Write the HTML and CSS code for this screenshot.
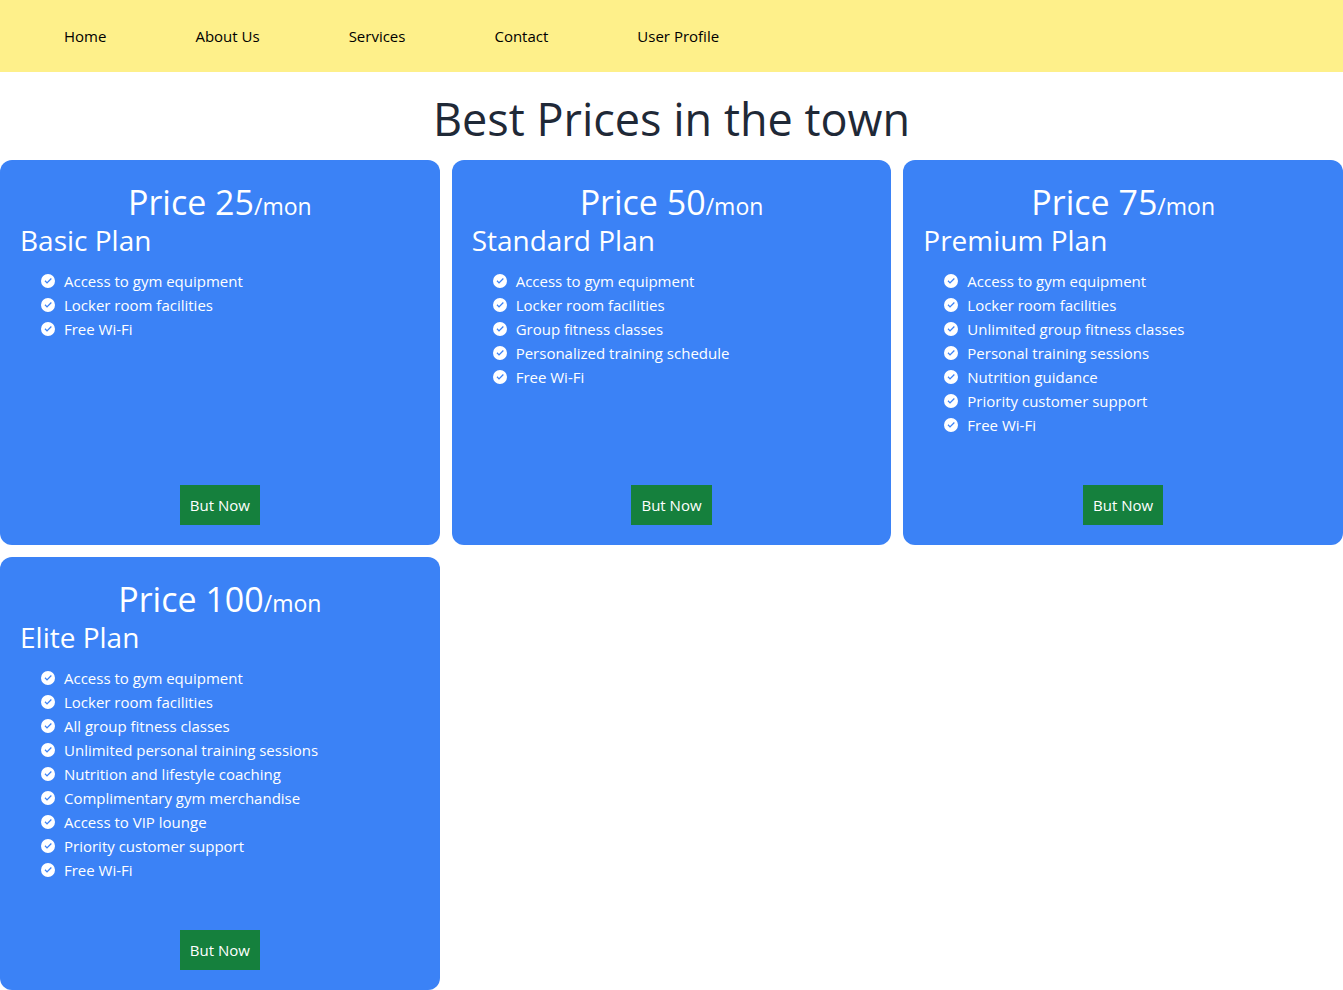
FILE: index.html
```html
<!DOCTYPE html>
<html lang="en">
<head>
<meta charset="utf-8">
<title>Gym Pricing</title>
<link rel="stylesheet" href="styles.css">
</head>
<body>
<svg class="sprite" aria-hidden="true">
  <symbol id="check" viewBox="0 0 24 24">
    <path fill="currentColor" fill-rule="evenodd" d="M12 0a12 12 0 1 0 0 24a12 12 0 0 0 0-24zM17 6.900l1.500 1.500l-8.200 8.200l-4.200-4.200l1.500-1.500l2.700 2.700z"/>
  </symbol>
</svg>
<nav class="nav">
  <ul class="nav-list">
    <li><a href="#home">Home</a></li>
    <li><a href="#about">About Us</a></li>
    <li><a href="#services">Services</a></li>
    <li><a href="#contact">Contact</a></li>
    <li><a href="#profile">User Profile</a></li>
  </ul>
</nav>
<main>
  <h1 class="title">Best Prices in the town</h1>
  <div class="plans">
    <section class="card">
      <p class="price">Price 25<span class="period">/mon</span></p>
      <h2 class="plan">Basic Plan</h2>
      <ul class="features">
        <li><svg class="icon"><use href="#check"/></svg>Access to gym equipment</li>
        <li><svg class="icon"><use href="#check"/></svg>Locker room facilities</li>
        <li><svg class="icon"><use href="#check"/></svg>Free Wi-Fi</li>
      </ul>
      <button class="buy" type="button">But Now</button>
    </section>
    <section class="card">
      <p class="price">Price 50<span class="period">/mon</span></p>
      <h2 class="plan">Standard Plan</h2>
      <ul class="features">
        <li><svg class="icon"><use href="#check"/></svg>Access to gym equipment</li>
        <li><svg class="icon"><use href="#check"/></svg>Locker room facilities</li>
        <li><svg class="icon"><use href="#check"/></svg>Group fitness classes</li>
        <li><svg class="icon"><use href="#check"/></svg>Personalized training schedule</li>
        <li><svg class="icon"><use href="#check"/></svg>Free Wi-Fi</li>
      </ul>
      <button class="buy" type="button">But Now</button>
    </section>
    <section class="card">
      <p class="price">Price 75<span class="period">/mon</span></p>
      <h2 class="plan">Premium Plan</h2>
      <ul class="features">
        <li><svg class="icon"><use href="#check"/></svg>Access to gym equipment</li>
        <li><svg class="icon"><use href="#check"/></svg>Locker room facilities</li>
        <li><svg class="icon"><use href="#check"/></svg>Unlimited group fitness classes</li>
        <li><svg class="icon"><use href="#check"/></svg>Personal training sessions</li>
        <li><svg class="icon"><use href="#check"/></svg>Nutrition guidance</li>
        <li><svg class="icon"><use href="#check"/></svg>Priority customer support</li>
        <li><svg class="icon"><use href="#check"/></svg>Free Wi-Fi</li>
      </ul>
      <button class="buy" type="button">But Now</button>
    </section>
    <section class="card">
      <p class="price">Price 100<span class="period">/mon</span></p>
      <h2 class="plan">Elite Plan</h2>
      <ul class="features">
        <li><svg class="icon"><use href="#check"/></svg>Access to gym equipment</li>
        <li><svg class="icon"><use href="#check"/></svg>Locker room facilities</li>
        <li><svg class="icon"><use href="#check"/></svg>All group fitness classes</li>
        <li><svg class="icon"><use href="#check"/></svg>Unlimited personal training sessions</li>
        <li><svg class="icon"><use href="#check"/></svg>Nutrition and lifestyle coaching</li>
        <li><svg class="icon"><use href="#check"/></svg>Complimentary gym merchandise</li>
        <li><svg class="icon"><use href="#check"/></svg>Access to VIP lounge</li>
        <li><svg class="icon"><use href="#check"/></svg>Priority customer support</li>
        <li><svg class="icon"><use href="#check"/></svg>Free Wi-Fi</li>
      </ul>
      <button class="buy" type="button">But Now</button>
    </section>
  </div>
</main>
</body>
</html>
```
FILE: styles.css
```css
* { box-sizing: border-box; }

body {
  margin: 0;
  background: #fff;
  color: #1f2937;
  font-family: "Segoe UI", "Open Sans", "Noto Sans", sans-serif;
  font-size: 15px;
  line-height: 24px;
}

h1, h2, p, ul { margin: 0; padding: 0; font-weight: 400; }
ul { list-style: none; }

.sprite { display: none; }

.nav { padding: 24px 64px; background: #fef08a; }
.nav-list { display: flex; flex-wrap: wrap; gap: 0 89px; }
.nav-list a { color: #000; text-decoration: none; }

.title {
  padding: 23px 0 17px;
  font-size: 45px;
  line-height: 48px;
  text-align: center;
}

.plans {
  display: grid;
  grid-template-columns: repeat(3, 1fr);
  gap: 12px;
}

.card {
  display: flex;
  flex-direction: column;
  padding: 20px;
  border-radius: 12px;
  background: #3b82f6;
  color: #fff;
}

.price { font-size: 34px; line-height: 44px; text-align: center; }
.period { font-size: 23px; line-height: 24px; }
.plan { font-size: 28px; line-height: 32px; }

.features { flex: 1; padding: 13px 20px 48px; }
.features li { display: flex; align-items: center; gap: 8px; }
.icon { flex: none; width: 16px; height: 14px; }

.buy {
  align-self: center;
  padding: 8px 10px;
  border: 0;
  background: #15803d;
  color: #fff;
  font: inherit;
  cursor: pointer;
}
```
